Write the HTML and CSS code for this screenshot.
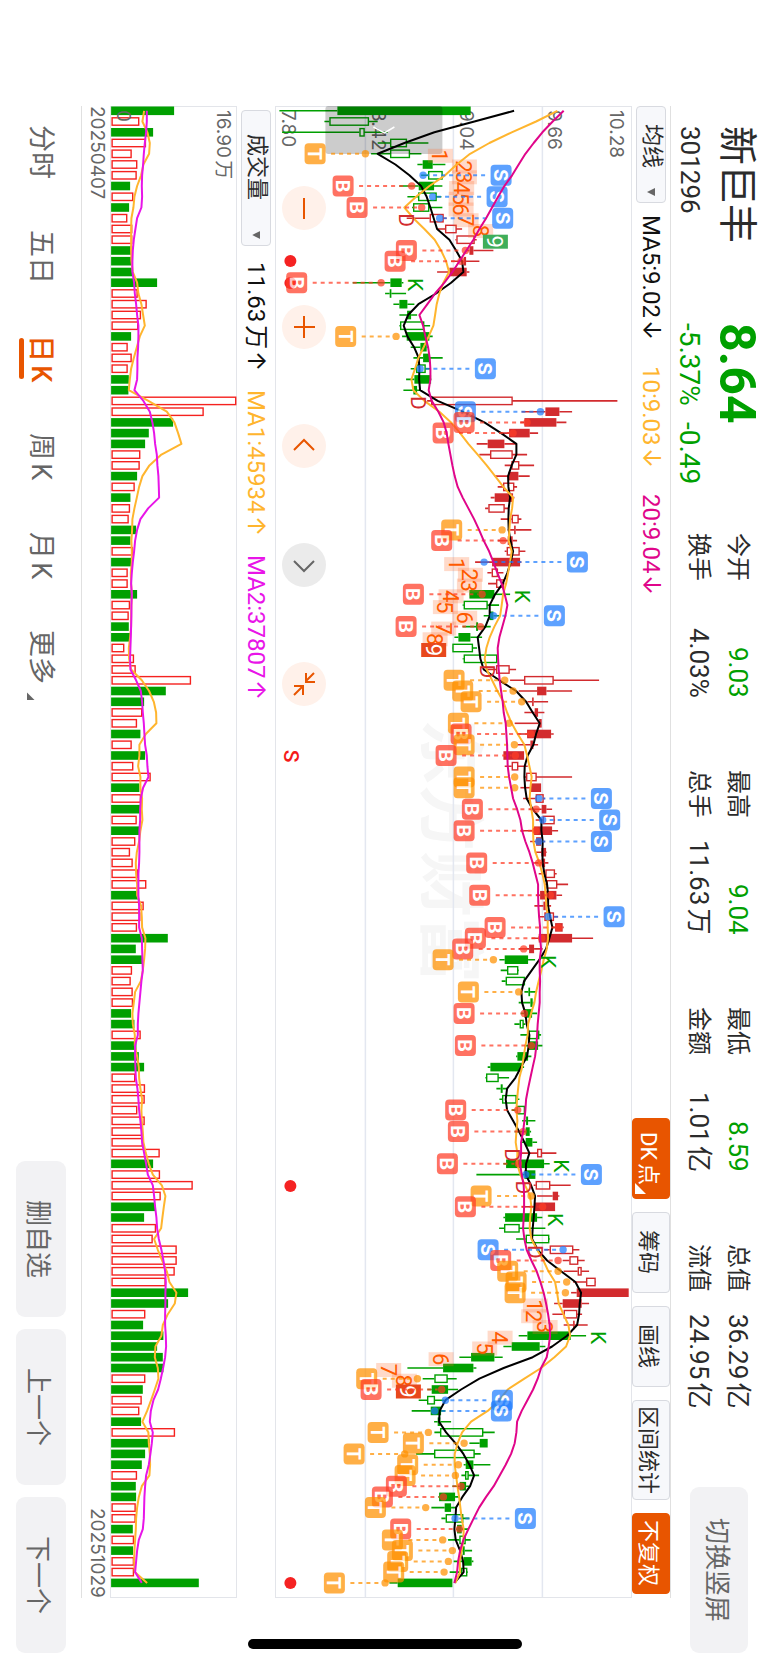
FILE: index.html
```html
<!DOCTYPE html>
<html lang="zh-CN">
<head>
  <meta charset="UTF-8">
  <meta name="viewport" content="width=device-width, initial-scale=1">
  <title>新巨丰 301296</title>
  <link rel="stylesheet" href="styles.css">
</head>
<body>

  <div class="screen">

    <header class="quote">
      <div class="quote-main">
        <h1>新巨丰</h1>
        <strong class="price">8.64</strong>
        <span class="code">301296</span>
        <span class="change"><span>-5.37%</span><span>-0.49</span></span>
      </div>
      <dl class="stats">
        <div><dt>今开</dt><dd class="down">9.03</dd></div>
        <div><dt>换手</dt><dd>4.03%</dd></div>
        <div><dt>最高</dt><dd class="down">9.04</dd></div>
        <div><dt>总手</dt><dd>11.63万</dd></div>
        <div><dt>最低</dt><dd class="down">8.59</dd></div>
        <div><dt>金额</dt><dd>1.01亿</dd></div>
        <div><dt>总值</dt><dd>36.29亿</dd></div>
        <div><dt>流值</dt><dd>24.95亿</dd></div>
      </dl>
      <button class="gray-btn switch-btn">切换竖屏</button>
    </header>

    <main class="board">
      <div class="toolbar">
        <span class="picker">
          <select aria-label="主图指标"><option>均线</option></select>
        </span>
        <span class="ma black">MA5:9.02<i>↓</i></span>
        <span class="ma yellow">10:9.03<i>↓</i></span>
        <span class="ma pink">20:9.04<i>↓</i></span>
        <div class="tools">
          <button class="on more">DK点</button>
          <button>筹码</button>
          <button>画线</button>
          <button class="wide">区间统计</button>
          <button class="on">不复权</button>
        </div>
      </div>

      <div class="kline">
        <svg id="kline" viewBox="0 0 354 1490" role="img" aria-label="日K线"></svg>
        <div class="zoom-btns">
          <button aria-label="缩小"><svg viewBox="0 0 44 44"><path d="M22 12v21"/></svg></button>
          <button aria-label="放大"><svg viewBox="0 0 44 44"><path d="M22 11v22M12 22h21"/></svg></button>
          <button aria-label="左移"><svg viewBox="0 0 44 44"><path d="M12 26l10-10 10 10"/></svg></button>
          <button aria-label="右移" class="off"><svg viewBox="0 0 44 44"><path d="M12 18l10 10 10-10"/></svg></button>
          <button aria-label="收起"><svg viewBox="0 0 44 44"><path d="M32 11L24 19M24 11v9h9M12 33l8-8M12 24h9v9"/></svg></button>
        </div>
      </div>

      <div class="toolbar sub">
        <span class="picker long">
          <select aria-label="副图指标"><option>成交量</option></select>
        </span>
        <span class="ma black">11.63万<i>↑</i></span>
        <span class="ma yellow">MA1:45934<i>↑</i></span>
        <span class="ma purple">MA2:37807<i>↑</i></span>
      </div>

      <div class="volume">
        <svg id="volume" viewBox="0 0 123 1490" role="img" aria-label="成交量"></svg>
      </div>

      <div class="dates"><span>20250407</span><span>20251029</span></div>
    </main>

    <footer class="bottom">
      <nav>
        <a href="#">分时</a>
        <a href="#">五日</a>
        <a href="#" class="active">日K</a>
        <a href="#">周K</a>
        <a href="#">月K</a>
        <a href="#" class="more">更多</a>
      </nav>
      <div class="actions">
        <button class="gray-btn">删自选</button>
        <button class="gray-btn">上一个</button>
        <button class="gray-btn">下一个</button>
      </div>
    </footer>

    <div class="home-bar"></div>
  </div>

  <script src="chart.js"></script>
</body>
</html>
```
FILE: styles.css
```css
* { box-sizing: border-box; }
body { margin: 0; background: #fff; color: #2b2b2b; font-family: Roboto, "Noto Sans CJK SC", sans-serif; }

/* landscape app shown on a portrait screen: everything runs top to bottom */
.screen {
  position: relative;
  display: flex;
  flex-direction: column;
  width: 100%;
  height: 100vh;
  writing-mode: vertical-rl;
  text-orientation: sideways;
  text-autospace: normal;
  white-space: nowrap;
}
button, select {
  writing-mode: inherit;
  text-orientation: inherit;
  text-autospace: inherit;
  font-family: inherit;
  color: inherit;
  margin: 0;
  padding: 0;
  border: none;
  cursor: pointer;
}
.gray-btn { background: #f2f2f4; color: #666; font-size: 26px; border-radius: 9px; }

/* quote */
.quote { display: flex; block-size: 98px; padding-inline: 126px 12px; }
.quote-main {
  display: grid;
  grid-template-columns: 197px 210px;
  grid-template-rows: 54px 41px;
  align-items: center;
  padding-block-start: 5px;
}
.quote-main h1 { margin: 0; font-size: 39px; line-height: 54px; font-weight: 400; }
.price { font-size: 50px; line-height: 54px; font-weight: 700; color: #00a000; }
.code { font-size: 26px; line-height: 41px; }
.change { display: flex; gap: 16px; font-size: 28px; line-height: 41px; color: #00a000; }
.stats {
  display: grid;
  grid-template-rows: 39px 39px;
  grid-auto-flow: column;
  grid-auto-columns: 165px;
  column-gap: 72px;
  margin: 0;
  padding-block-start: 12px;
}
.stats div { display: flex; justify-content: space-between; line-height: 39px; }
.stats dt { font-size: 24px; }
.stats dd { margin: 0; font-size: 26px; }
.stats .down { color: #00a000; }
.switch-btn { inline-size: 166px; block-size: 58px; margin-block-start: 21px; margin-inline-start: auto; }

/* charts */
.board {
  flex: 1;
  display: flex;
  flex-direction: column;
  margin-inline: 106px 67px;
  border-block: 1px solid #e0e0e0;
}
.toolbar { display: flex; align-items: center; block-size: 38px; font-size: 24px; padding-inline-end: 4px; }
.picker { position: relative; margin-inline-end: 12px; }
.picker select {
  appearance: none;
  display: block;
  inline-size: 97px;
  block-size: 30px;
  padding-inline-start: 17px;
  background: #f7f8fb;
  border: 1px solid #d8dae0;
  border-radius: 4px;
  font-size: 22px;
}
.picker::after {
  content: "";
  position: absolute;
  inset-inline-end: 7px;
  inset-block-start: 11px;
  inline-size: 8px;
  block-size: 8px;
  background: #666;
  clip-path: polygon(100% 0, 0 50%, 100% 100%);
}
.picker.long { margin-inline: 4px 16px; }
.picker.long select { inline-size: 136px; padding-inline-start: 23px; }
.ma { margin-inline-end: 26px; line-height: 30px; }
.ma i { margin-inline-start: 2px; font-family: Inter, sans-serif; font-style: normal; font-size: 24px; line-height: 24px; }
.sub .ma { margin-inline-end: 19px; }
.black { color: #111; }
.yellow { color: #ffb52e; }
.pink { color: #e0058a; }
.purple { color: #e815e8; }
.tools { display: flex; gap: 13px; margin-inline-start: auto; }
.tools button {
  position: relative;
  inline-size: 81px;
  block-size: 38px;
  background: #f7f8fb;
  border: 1px solid #d8dae0;
  border-radius: 4px;
  font-size: 22px;
}
.tools .wide { inline-size: 100px; }
.tools .on { background: #e85500; border-color: #e85500; color: #fff; }
.more::after {
  content: "";
  position: absolute;
  left: 2px;
  bottom: 4px;
  width: 11px;
  height: 11px;
  background: currentColor;
  clip-path: polygon(0 0, 100% 100%, 0 100%);
}
.kline, .volume { position: relative; border: 1px solid #e3e5ea; }
.kline { flex: 357; }
.volume { flex: 126; }
.kline > svg, .volume > svg { position: absolute; inset: 0; width: 100%; height: 100%; overflow: visible; }
svg text { writing-mode: horizontal-tb; }
.zoom-btns { position: absolute; left: 6px; top: 79px; display: flex; gap: 75px; }
.zoom-btns button { width: 44px; height: 44px; border-radius: 50%; background: #fff1ea; color: #e85500; }
.zoom-btns .off { background: #ebebeb; color: #666; }
.zoom-btns svg { display: block; width: 100%; height: 100%; fill: none; stroke: currentColor; stroke-width: 2; }
.dates {
  display: flex;
  justify-content: space-between;
  block-size: 28px;
  line-height: 26px;
  font-family: Inter, sans-serif;
  font-size: 19px;
  color: #666;
}

/* bottom bar */
.bottom { display: flex; justify-content: space-between; align-items: center; block-size: 81px; padding-inline: 125px 12px; }
nav { display: flex; gap: 51px; font-size: 27px; line-height: 60px; }
nav a { position: relative; color: #666; text-decoration: none; }
nav .active { color: #e85500; font-weight: 500; }
nav .active::after {
  content: "";
  position: absolute;
  left: 8px;
  inset-inline: 3px;
  width: 5px;
  border-radius: 3px;
  background: #e85500;
}
nav .more::after { left: 16px; bottom: -16px; width: 8px; height: 8px; }
.actions { display: flex; gap: 12px; }
.actions button { inline-size: 156px; block-size: 50px; }
.home-bar {
  position: absolute;
  left: 50%;
  bottom: 16px;
  width: 274px;
  height: 10px;
  margin-left: -137px;
  border-radius: 5px;
  background: #000;
}

/* svg parts */
.axis { font-family: Inter, "Noto Sans CJK SC", sans-serif; font-size: 19px; fill: #666; }
.mark { font-family: Inter, sans-serif; font-size: 19px; font-weight: 700; fill: #fff; text-anchor: middle; }
.dk { font-size: 21px; text-anchor: middle; }
.count { font-size: 22px; text-anchor: middle; }
.water { font-family: "Noto Sans CJK SC", sans-serif; font-size: 66px; font-weight: 700; fill: #f6f6f6; }
.line { fill: none; stroke-width: 2; stroke-linejoin: round; }
```
FILE: chart.js
```js
// one row per day: kind, low, body from, body to, high
// G/R filled, g/r hollow. Levels are in thirds of a pixel.
const days = `G 30 204 604 604|g 165 180 297 325|g 38 270 284 355|g 325 362 411 477|g 305 362 420 456|G 444 460 490 528
g 455 476 518 520|G 390 448 494 519|g 414 446 500 516|g 428 431 478 519|r 412 481 521 532|r 503 527 560 578
r 558 561 614 622|R 590 600 612 672|R 545 583 590 630|R 503 540 592 600|G 250 363 397 402|G 347 361 366 410
G 372 390 414 435|G 390 413 425 443|g 390 392 463 482|G 398 412 480 490|G 424 453 472 476|G 432 461 480 520
g 424 440 467 484|G 410 435 485 486|G 402 432 443 452|r 473 485 728 1044|R 757 828 870 908|R 753 765 861 891
R 690 719 781 806|R 622 655 705 742|r 630 662 728 773|r 706 726 748 794|R 676 717 747 781|r 685 701 733 743
R 664 676 731 735|r 647 657 704 718|r 694 727 746 756|R 715 734 739 786|R 685 715 730 743|r 706 712 749 768
R 617 668 752 756|r 654 667 684 702|r 656 680 702 705|G 600 600 675 722|g 580 583 653 689|G 643 660 672 690
G 580 620 626 664|G 555 567 603 638|g 548 549 609 623|g 580 583 682 686|r 650 680 719 740|r 722 764 851 989
R 748 803 831 908|R 774 788 793 836|R 765 796 806 825|R 736 808 817 817|R 745 773 845 853|R 745 783 792 806
R 702 702 764 764|r 706 727 745 775|r 766 770 800 908|R 753 782 815 815|r 761 799 821 827|R 780 817 831 848
r 799 820 854 857|R 754 793 848 866|R 782 800 815 827|R 800 816 830 832|R 795 817 827 837|r 808 828 855 862
r 825 832 862 896|R 800 812 861 878|R 795 822 829 845|r 808 825 852 866|R 850 857 880 883|R 787 808 908 971
R 748 779 794 820|G 690 706 776 797|g 694 713 745 748|g 697 709 765 768|G 765 777 782 803|G 748 783 790 792
G 754 765 788 803|g 735 751 761 768|g 753 776 808 815|G 768 776 806 819|G 740 744 776 786|G 655 663 758 764
g 648 650 686 719|G 681 694 700 713|g 690 698 740 750|g 727 741 765 766|G 758 770 776 798|G 736 769 781 785
G 757 769 789 803|r 752 803 816 861|G 702 710 824 841|G 621 765 798 798|r 793 799 841 904|R 803 850 866 870
R 757 795 857 857|G 702 707 803 819|g 689 704 749 828|g 740 769 838 841|r 825 841 910 930|r 880 900 925 946
r 883 925 935 959|r 911 950 977 979|R 905 922 1078 1078|R 854 880 937 959|r 849 883 922 938|R 883 911 915 955
G 748 774 904 950|G 702 727 811 828|G 570 605 675 700|G 414 521 612 621|g 460 495 533 562|G 474 487 536 566
g 448 473 495 524|G 427 484 515 528|G 494 505 513 545|g 495 512 640 676|G 600 631 655 655|g 440 494 614 634
G 583 589 612 663|g 576 587 596 629|G 549 571 590 600|G 507 509 557 570|G 486 526 545 562|g 516 529 580 600
G 560 563 577 596|g 536 570 587 604|G 570 580 586 608|G 553 582 607 612|g 541 575 592 595|G 360 385 549 549`;

const ma5 = [734,615,495,405,325,378,420,455,472,483,493,503,540,560,578,582,545,500,447,416,403,414,434,448,450,449,452,505,580,645,695,741,741,727,716,717,722,718,717,718,723,731,724,714,700,677,661,661,648,625,629,633,643,690,740,770,790,811,800,792,775,766,765,767,772,790,816,816,820,819,820,825,833,836,836,842,849,840,830,810,787,764,756,758,768,772,780,778,773,755,738,713,709,713,731,749,765,780,770,769,785,797,795,793,790,788,805,833,875,918,935,931,929,923,893,848,790,703,630,575,528,511,509,530,558,582,600,614,602,579,560,558,555,559,572,581,583,555];
const ma10 = [864,800,727,660,602,562,527,480,440,405,432,465,496,515,530,539,522,510,502,497,492,478,463,447,437,426,432,465,510,545,572,597,625,652,677,702,731,728,722,720,718,727,722,716,710,701,697,692,675,661,651,646,652,668,684,702,713,727,745,765,773,780,787,783,781,786,791,791,792,798,810,819,826,829,831,835,835,836,832,823,816,808,800,795,785,776,775,768,763,758,750,746,743,741,744,741,739,744,743,753,767,782,786,782,781,786,803,822,837,857,863,868,882,897,902,890,855,815,765,715,690,655,605,578,565,556,556,560,564,569,573,577,583,582,577,571,572,558];
const ma20 = [883,850,819,793,768,748,728,705,686,668,650,630,612,591,570,549,525,497,474,450,461,468,476,481,483,483,478,487,507,523,532,537,543,549,556,565,580,597,614,629,643,659,672,684,697,706,714,708,699,690,685,686,688,691,695,700,703,709,711,713,714,715,719,725,731,743,753,758,768,780,790,798,806,806,807,809,812,812,815,811,811,812,811,811,808,805,803,801,797,790,783,776,770,768,765,761,755,755,752,757,763,764,764,763,761,765,772,786,802,813,823,830,836,841,842,838,832,815,805,791,774,757,743,741,736,725,709,691,673,650,629,613,597,582,572,566,563,555];

const vol = "G522 r418 G459 r438 r395 r412 r410 G390 r400 G387 r382 r397 r397 G397 G397 G397 G471 r413 r440 r423 r415 G393 r383 r395 r383 G386 G385 r709 r611 G519 G446 G435 r421 r419 G411 r404 G391 r390 r386 G408 G391 r399 G395 r383 r383 G411 r390 r386 G386 G391 r373 r402 r407 r573 G497 G432 r427 r411 G421 r395 G435 r400 r452 G418 r423 G420 r410 G420 r406 r390 r398 r414 r439 G415 r431 r421 r411 G503 G407 G428 r396 r392 r398 r399 G393 G403 r422 G409 G416 G432 r406 r435 r434 r412 r434 r428 r429 r479 G459 r480 r578 r482 G465 G432 r468 r458 r530 r530 r524 r497 G564 G504 r436 G429 G490 G471 G488 G490 r436 G428 r425 r418 G423 r525 G449 G435 G425 r411 G407 G408 r407 r407 G398 r402 G399 r402 r402 G596".split(" ");
const volMa1 = [432,427,442,449,447,430,423,411,403,400,394,393,393,393,394,398,411,415,424,429,434,419,410,401,393,389,386,445,500,523,534,544,484,448,427,417,410,403,397,396,394,395,395,392,393,395,394,393,393,390,386,387,393,425,447,461,468,469,437,418,418,414,421,421,426,425,427,421,417,410,407,408,411,411,423,425,426,436,435,432,428,422,405,401,397,398,404,404,411,416,417,421,426,424,425,428,430,437,446,458,485,496,491,487,483,462,473,486,500,508,529,524,503,488,484,466,464,473,475,464,453,441,427,445,446,449,450,448,425,416,411,408,407,405,403,402,404,441];
const volMa2 = [440,440,438,434,431,429,426,425,426,424,411,406,401,398,397,397,402,404,408,411,415,415,414,412,412,411,403,430,449,457,462,465,470,472,475,476,477,444,421,411,405,402,398,395,393,395,394,394,393,392,391,390,391,408,422,426,428,431,433,435,440,442,445,429,422,420,420,418,418,418,417,415,415,415,417,417,417,425,426,427,428,424,421,418,415,413,413,405,405,406,407,412,415,417,421,424,426,432,438,443,458,462,465,469,471,476,484,490,495,497,496,496,495,495,497,498,495,489,482,474,460,452,449,458,455,451,446,438,435,433,432,431,428,416,411,408,405,425];

// day, letter, badge level, dot level
const marks = `4 T 137 288|6 S 695 461|7 B 221 427|8 S 683 490|9 B 263 457|10 S 700 511|13 B 411 588|14 B 377 575|16 B 82 335
21 T 229 380|24 S 648 452|28 S 588 813|29 B 584 773|30 B 521 731|39 T 547 698|40 B 517 701|42 S 924 644|45 B 432 638
47 S 855 672|48 B 410 633|53 T 554 706|54 T 580 731|55 T 605 757|57 T 567 719|58 B 575 785|59 T 584 735|60 B 530 738
62 T 584 736|63 T 584 736|64 S 996 808|65 B 609 800|66 S 1021 820|67 B 584 800|68 S 996 808|70 B 622 808|73 B 631 843
75 S 1034 836|76 B 677 868|77 B 618 817|78 B 580 763|79 T 521 672|82 T 597 748|84 B 584 765|87 B 588 786|93 B 559 745
95 B 567 761|98 B 534 747|99 S 966 769|101 T 635 785|102 B 588 820|106 S 656 881|107 B 694 866|108 T 715 866
109 T 740 892|110 T 737 888|118 T 292 444|119 B 305 517|120 S 699 528|121 S 696 496|123 T 326 477|124 T 432 584
125 T 254 406|126 T 415 567|127 T 407 558|128 B 381 575|129 B 339 522|130 T 318 469|131 S 768 557|132 B 394 570
133 T 369 520|134 T 399 549|135 T 385 537|136 T 373 524|137 T 195 347`;
const dk = "10 D 390|16 K 416|27 D 424|45 K 738|52 D 632|79 K 815|97 D 707|98 K 855|100 D 740|103 K 836|106 D 775|114 K 966";

// nine-day counts: first day, then the level of each number
const counts = [
  { from: 4, at: [513, 585, 585, 577, 575, 575, 590, 634, 678], end: "#3fae5a" },
  { from: 42, at: [562, 603, 600, 545, 528, 586, 523, 497, 493], end: "#e8481c" },
  { from: 111, at: [798, 793, 827, 692, 646, 515, 358, 405, 417], end: "#e8481c" }
];

const GREEN = "#00a000", RED = "#d22b2e";
const tint = { B: "#ff3d26", T: "#ff9100", S: "#1f7dff" };
const rows = s => s.split(/[|\n]/).map(r => r.split(" "));
const X = u => +(u / 3 - 7).toFixed(1);
const Y = i => +(3.8 + i * 10.745).toFixed(1);
const text = (cls, x, y, s, extra = "") => `<text class="${cls}" transform="translate(${x} ${y}) rotate(90)" ${extra}>${s}</text>`;
const line = (data, color, x) => `<path class="line" stroke="${color}" d="M${data.map((v, i) => x(v) + " " + Y(i)).join("L")}"/>`;

function drawKline() {
  let out = text("water", 151, 612, "东方财富");
  [89, 177, 266].forEach(x => out += `<path d="M${x} 0V1490" stroke="#e3e7f0" stroke-width="1.5"/>`);
  [["7.80", 6], ["8.42", 96], ["9.04", 184], ["9.66", 272], ["10.28", 334]].forEach(([s, x]) => out += text("axis", x, 3, s));

  rows(days).forEach(([k, lo, a, b, hi], i) => {
    const c = k.toUpperCase() === "G" ? GREEN : RED;
    const y = Y(i), x1 = X(a), x2 = X(b);
    out += `<path d="M${X(lo)} ${y}H${x1}M${x2} ${y}H${X(hi)}" stroke="${c}" stroke-width="1.6"/>`;
    if (k === "G" || k === "R") out += `<rect x="${x1}" y="${y - 4.3}" width="${Math.max(1.6, x2 - x1)}" height="8.6" fill="${c}"/>`;
    else out += `<rect x="${x1 + .6}" y="${y - 3.7}" width="${Math.max(2, x2 - x1 - .6)}" height="7.4" fill="none" stroke="${c}" stroke-width="1.4"/>`;
  });

  out += `<rect x="49" y="-1" width="117" height="48" rx="3" opacity=".2"/><path d="M97 20l11 6 10-6" fill="none" stroke="#fff" stroke-width="1.5"/>`;

  counts.forEach(({ from, at, end }) => at.forEach((u, n) => {
    const x = X(u), y = Y(from + n) + 2, last = n === 8;
    out += `<rect x="${x - 12.5}" y="${y - 7}" width="25" height="14" fill="${last ? end : "#ff6a2a"}" opacity="${last ? 1 : .25}"/>`;
    out += text("count", x - 8, y, n + 1, `fill="${last ? "#fff" : "#ff5a00"}"`);
  }));

  out += line(ma5, "#000", X) + line(ma10, "#ffb52e", X);
  rows(dk).forEach(([i, s, u]) => out += text("dk", X(u), Y(i) + 2, s, `fill="${s === "K" ? GREEN : RED}"`));
  [154, 176, 1079, 1476].forEach(y => out += `<circle cx="14" cy="${y}" r="6" fill="#f52222"/>`);

  rows(marks).forEach(([i, s, box, dot]) => {
    const y = Y(i), bx = X(box), dx = X(dot), dir = Math.sign(dx - bx);
    out += `<g opacity=".72"><path d="M${bx + dir * 16} ${y}H${dx - dir * 4}" stroke="${tint[s]}" stroke-width="2" stroke-dasharray="4 4"/>`;
    out += `<circle cx="${dx}" cy="${y}" r="3.7" fill="${tint[s]}"/>`;
    out += `<rect x="${bx - 10.5}" y="${y - 10.5}" width="21" height="21" rx="4" fill="${tint[s]}"/>`;
    out += text("mark", bx - 7, y, s) + "</g>";
  });
  out += line(ma20, "#e0058a", X);

  out += text("dk", 8, 649, "S", 'fill="#f51a1a" font-weight="500"');
  document.getElementById("kline").innerHTML = out;
}

function drawVolume() {
  const x = u => +((u - 336) / 3).toFixed(1);
  let out = "";
  vol.forEach((v, i) => {
    const end = x(+v.slice(1)), y = Y(i);
    if (v[0] === "G") out += `<rect x="-1" y="${y - 4.3}" width="${end + 1}" height="8.6" fill="${GREEN}"/>`;
    else out += `<rect x="0" y="${y - 3.7}" width="${end - .7}" height="7.4" fill="none" stroke="#f5221f" stroke-width="1.4"/>`;
  });
  out += line(volMa1, "#ffb52e", x) + line(volMa2, "#e815e8", x);
  out += text("axis", 105, 3, "16.90万") + text("axis", 5, 3, "0");
  document.getElementById("volume").innerHTML = out;
}

drawKline();
drawVolume();
```
